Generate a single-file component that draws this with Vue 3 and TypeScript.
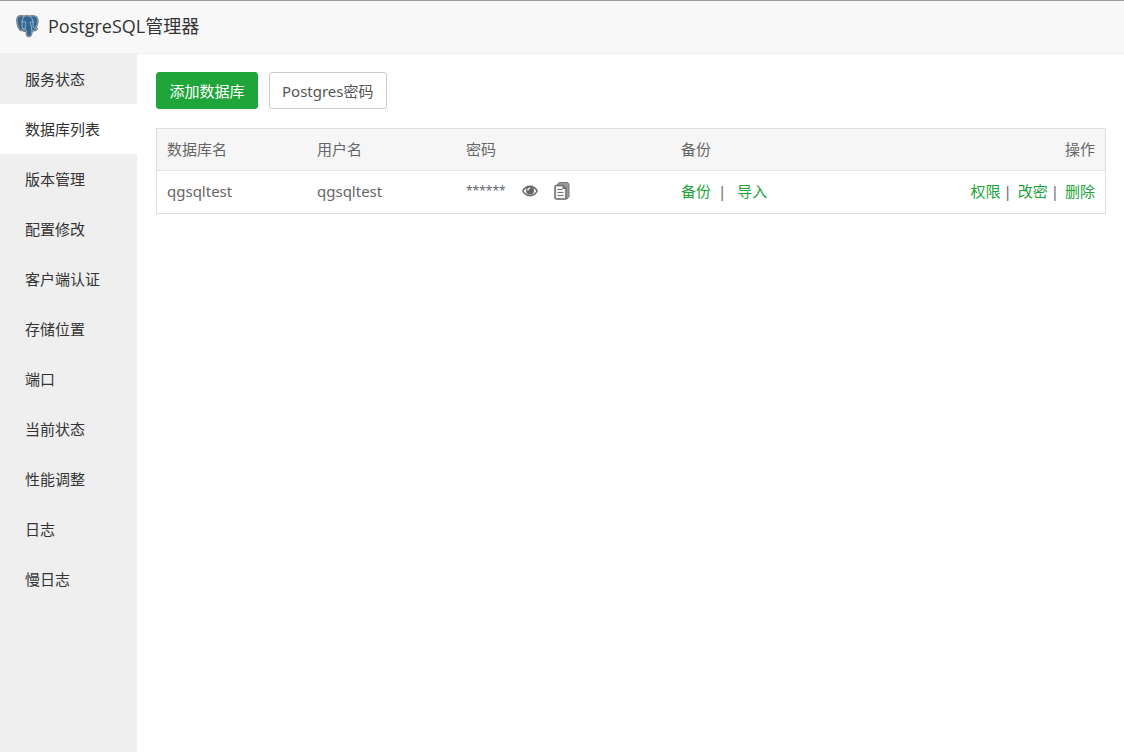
<script setup lang="ts">
import { ref } from 'vue'

interface Database {
  name: string
  user: string
  password: string
}

const menu: string[] = [
  '服务状态',
  '数据库列表',
  '版本管理',
  '配置修改',
  '客户端认证',
  '存储位置',
  '端口',
  '当前状态',
  '性能调整',
  '日志',
  '慢日志',
]
const active = ref('数据库列表')

const databases: Database[] = [
  { name: 'qgsqltest', user: 'qgsqltest', password: '******' },
]
</script>

<template>
  <div class="window">
    <header class="titlebar">
      <svg class="logo" viewBox="0 0 24 24" aria-hidden="true">
        <path
          d="M8.600 1.600C6 .5 2.600.8 1.500 3.400.4 6.200 2 12.200 3.800 15.400c.9 1.500 2 1.600 2.900.5l.9-1c.6.5 1.500.6 2.300.6-.8.5-2.200.6-2 1.300.4 1 2.300.9 3.500.2l.2 3.600c.2 2 1.300 3 2.900 2.700 1.700-.3 2.200-1.500 2.400-3l.4-3.600c1.900.6 4.400 0 5.500-1.400.5-.8-.9-.8-2-.7 1.900-2.900 3.400-7.600 2.500-10.400C22.200 1 18.200.2 15.300 1.500 13.200.8 10.600.7 8.600 1.600z"
          fill="#336791"
          stroke="#5f6469"
          stroke-width="2"
        />
        <path
          d="M8.600 1.600C6 .5 2.600.8 1.500 3.400.4 6.200 2 12.200 3.800 15.400c.9 1.500 2 1.600 2.900.5l.9-1c.6.5 1.500.6 2.300.6-.8.5-2.200.6-2 1.300.4 1 2.300.9 3.500.2l.2 3.600c.2 2 1.300 3 2.900 2.700 1.700-.3 2.200-1.500 2.400-3l.4-3.600c1.900.6 4.400 0 5.500-1.400.5-.8-.9-.8-2-.7 1.900-2.900 3.400-7.600 2.500-10.400C22.200 1 18.200.2 15.300 1.500 13.200.8 10.600.7 8.600 1.600z"
          fill="#336791"
          stroke="#c5cfd8"
          stroke-width=".6"
        />
        <path
          d="M8.600 1.800C6.400 4 6.600 8 6.600 11c0 2 .4 3 1.200 3.900M15.300 1.600c2.400 1.600 3.600 4.200 3.400 7-.1 2.200-.6 3.800 1.300 5.900M6.800 8c1-.9 3-.9 3.600 0 .5 1.200-.4 3.300-.2 4.700.1 1.200-.6 2-.3 2.800M18.600 7.700c-1-.5-2.400-.5-3 .2-.6 1.400 1.400 3.600 1.500 5.600l-.1 2.500"
          fill="none"
          stroke="#d5e0e9"
          stroke-width=".7"
          stroke-linecap="round"
        />
      </svg>
      <h1>PostgreSQL管理器</h1>
    </header>

    <div class="body">
      <nav class="sidebar">
        <button
          v-for="item in menu"
          :key="item"
          type="button"
          class="menu-item"
          :class="{ active: item === active }"
          @click="active = item"
        >
          {{ item }}
        </button>
      </nav>

      <main class="content">
        <div class="toolbar">
          <button type="button" class="btn primary">添加数据库</button>
          <button type="button" class="btn">Postgres密码</button>
        </div>

        <table class="grid">
          <colgroup>
            <col class="col-name" />
            <col class="col-user" />
            <col class="col-password" />
            <col />
            <col />
          </colgroup>
          <thead>
            <tr>
              <th>数据库名</th>
              <th>用户名</th>
              <th>密码</th>
              <th>备份</th>
              <th class="right">操作</th>
            </tr>
          </thead>
          <tbody>
            <tr v-for="db in databases" :key="db.name">
              <td>{{ db.name }}</td>
              <td>{{ db.user }}</td>
              <td>
                <div class="secret">
                  <span class="mask">{{ db.password }}</span>
                  <button type="button" class="icon-btn" aria-label="显示密码">
                    <svg width="16" height="16" viewBox="0 0 16 16">
                      <path
                        d="M0 8C1.700 4.600 4.700 2.600 8 2.600s6.300 2 8 5.400c-1.700 3.300-4.700 5.400-8 5.400S1.700 11.300 0 8z"
                        fill="#666"
                      />
                      <path
                        d="M1.600 8c.8-1.400 1.900-2.400 3.200-3A4.500 4.500 0 0 0 4 7.600a4 4 0 0 0 8 0A4.500 4.500 0 0 0 11.200 5c1.300.6 2.400 1.600 3.200 3-1.400 2.300-3.700 3.900-6.400 3.900S3 10.300 1.600 8z"
                        fill="#fff"
                      />
                      <path
                        d="M5.900 7.200A2.200 2.200 0 0 1 8 5"
                        fill="none"
                        stroke="#fff"
                        stroke-width="1.200"
                        stroke-linecap="round"
                      />
                    </svg>
                  </button>
                  <button type="button" class="icon-btn" aria-label="复制密码">
                    <svg width="16" height="18" viewBox="0 0 16 18">
                      <path
                        d="M5 .5h8.500L15 2v12.500L13 17H3V3z"
                        fill="#999"
                        stroke="#777"
                        stroke-linejoin="round"
                      />
                      <path
                        d="M2.500 3.500H9L12 6.500V15.500q0 1.500-1.500 1.500H2.500Q1 17 1 15.500V5Q1 3.500 2.500 3.500z"
                        fill="#f2f2f2"
                        stroke="#707070"
                        stroke-width="1.600"
                        stroke-linejoin="round"
                      />
                      <path d="M8.500 3.500V7H12z" fill="#707070" />
                      <path d="M3.500 7.500h5M3.500 10.500h6M3.500 13.500h6" stroke="#777" stroke-width="1.200" />
                    </svg>
                  </button>
                </div>
              </td>
              <td>
                <div class="links">
                  <a href="#">备份</a><span class="sep wide">|</span><a href="#">导入</a>
                </div>
              </td>
              <td>
                <div class="links end">
                  <a href="#">权限</a><span class="sep">|</span><a href="#">改密</a><span class="sep">|</span><a href="#">删除</a>
                </div>
              </td>
            </tr>
          </tbody>
        </table>
      </main>
    </div>
  </div>
</template>

<style>
body {
  margin: 0;
}
</style>

<style scoped>
.window {
  box-sizing: border-box;
  display: flex;
  flex-direction: column;
  min-height: 100vh;
  border-top: 1px solid #999;
  background: #fff;
  color: #666;
  font: 15px/20px 'Noto Sans', 'Noto Sans CJK SC', sans-serif;
}

button {
  font: inherit;
  cursor: pointer;
}

.titlebar {
  box-sizing: border-box;
  display: flex;
  align-items: center;
  gap: 10px;
  height: 53px;
  padding: 0 16px 2px;
  border-bottom: 1px solid #eee;
  background: #f8f8f8;
}

.logo {
  width: 22px;
  height: 22px;
  overflow: visible;
}

h1 {
  margin: 0;
  color: #333;
  font-family: 'Open Sans', 'Noto Sans CJK SC', sans-serif;
  font-size: 18px;
  font-weight: 400;
  line-height: 24px;
}

.body {
  display: flex;
  flex: 1;
}

.sidebar {
  display: flex;
  flex-direction: column;
  flex: none;
  width: 137px;
  background: #efefef;
}

.menu-item {
  height: 50px;
  padding: 0 0 0 25px;
  border: 0;
  background: none;
  color: #333;
  text-align: left;
}

.menu-item.active {
  background: #fff;
}

.content {
  flex: 1;
  min-width: 0;
  padding: 18px 18px 18px 19px;
}

.toolbar {
  display: flex;
  gap: 11px;
  margin-bottom: 19px;
}

.btn {
  height: 37px;
  padding: 0 12px;
  border: 1px solid #ccc;
  border-radius: 3px;
  background: #fff;
  color: #555;
}

.btn.primary {
  min-width: 102px;
  border-color: #20a53a;
  background: #20a53a;
  color: #fff;
}

.grid {
  width: 100%;
  table-layout: fixed;
  border: 1px solid #ddd;
  border-spacing: 0;
}

.col-name {
  width: 150px;
}

.col-user {
  width: 149px;
}

.col-password {
  width: 215px;
}

th,
td {
  height: 42px;
  padding: 0 10px 2px;
  box-sizing: border-box;
  text-align: left;
  font-weight: 400;
}

th {
  background: #f6f6f6;
  border-bottom: 1px solid #e4e4e4;
}

th.right {
  text-align: right;
}

.secret {
  display: flex;
  align-items: center;
  gap: 16px;
}

.mask {
  font-size: 12px;
}

.icon-btn {
  display: flex;
  padding: 0;
  border: 0;
  background: none;
}

.links {
  display: flex;
}

.links.end {
  justify-content: flex-end;
}

.sep {
  margin: 0 6px 0 3px;
}

.sep.wide {
  margin: 0 11px 0 7px;
}

a {
  color: #20a53a;
  text-decoration: none;
}
</style>
